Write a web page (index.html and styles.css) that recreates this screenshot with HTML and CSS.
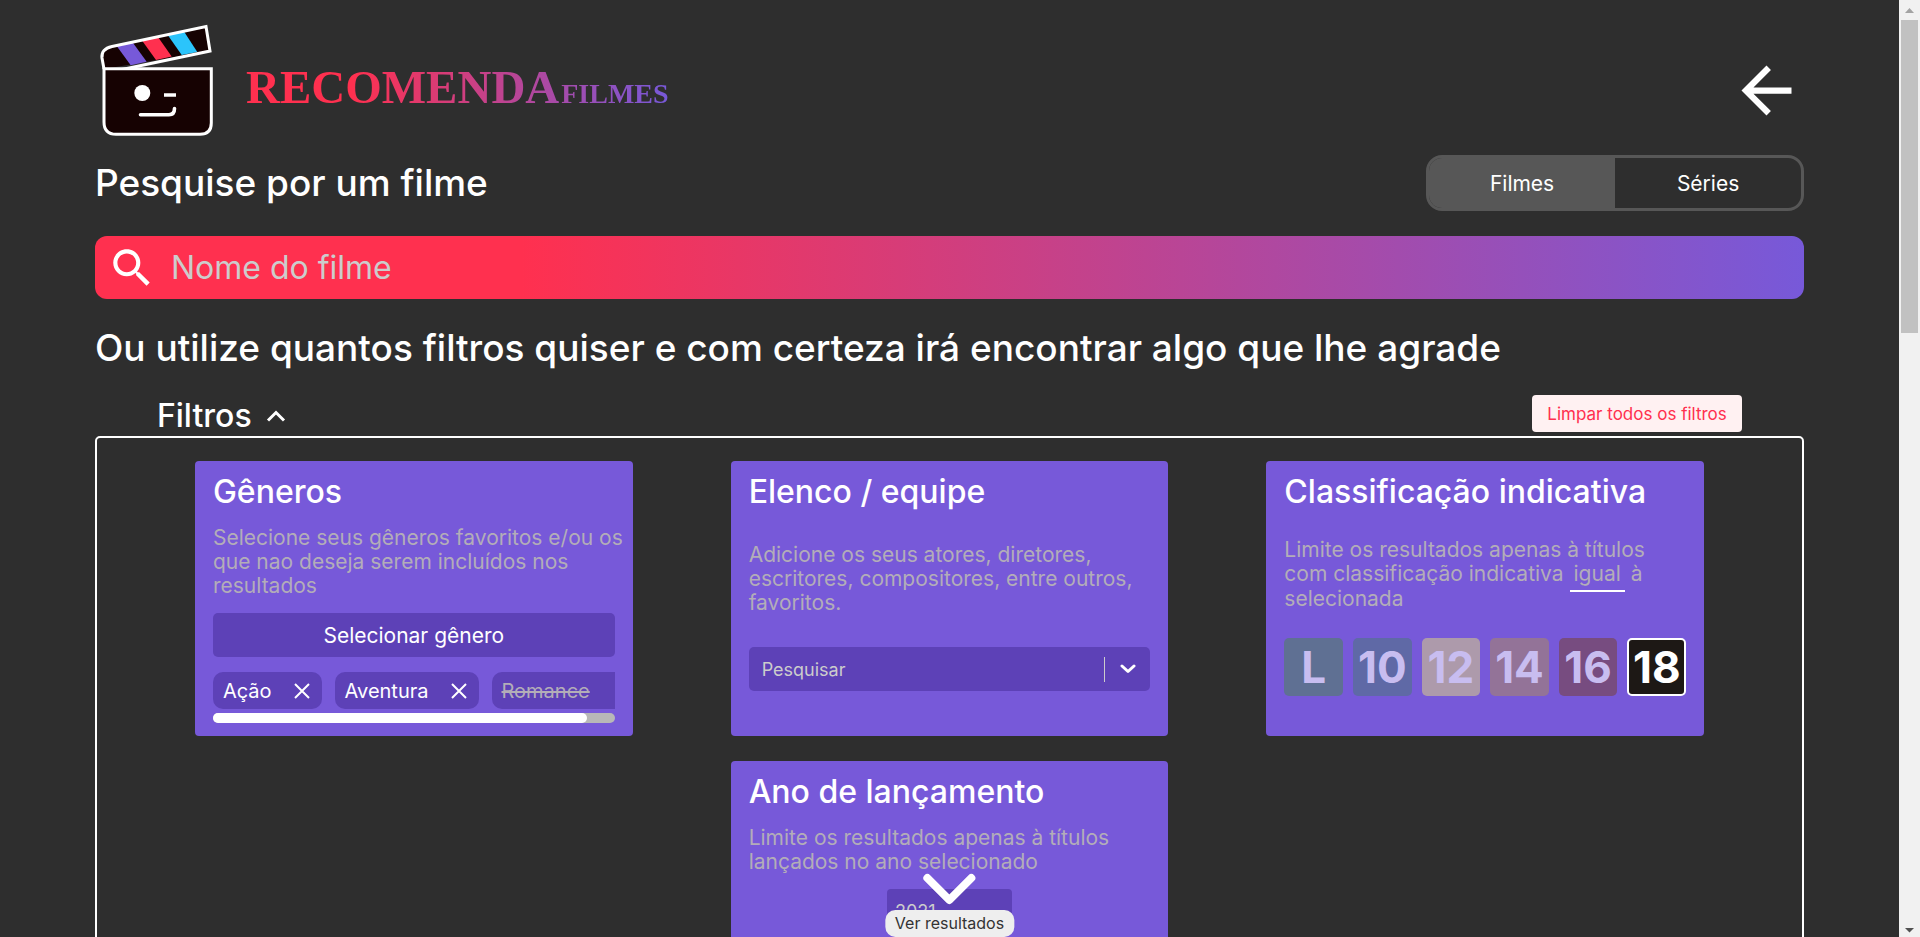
FILE: index.html
```html
<!DOCTYPE html>
<html lang="pt-BR">
<head>
<meta charset="utf-8">
<meta name="viewport" content="width=device-width, initial-scale=1">
<title>Recomenda Filmes</title>
<link rel="stylesheet" href="styles.css">
</head>
<body>
<div class="viewport">
  <main class="page">
    <header class="header">
      <a class="brand" href="#">
        <svg class="brand-logo" viewBox="0 0 120 120" aria-hidden="true">
          <path d="M9 49 L7 38 Q6 29 17 26.500 L111 6.500 L115 31 Z" fill="#160202"/>
          <path d="M21.700 26 37.700 22.500 51.700 41.700 35.700 45.300Z" fill="#7759d9"/>
          <path d="M47 20.500 63 17 76.700 36.500 61 40Z" fill="#ff304f"/>
          <path d="M72.700 15 89 11.500 102.300 32 86.700 35Z" fill="#2bc4fb"/>
          <path d="M9 49 L7 38 Q6 29 17 26.500 L111 6.500 L115 31 L20 51" fill="none" stroke="#fff" stroke-width="3"/>
          <path d="M9 48.700H116.300V103Q116.300 114.300 105 114.300H21Q9 114.300 9 102Z" fill="#160202" stroke="#fff" stroke-width="3"/>
          <circle cx="47.300" cy="73" r="8" fill="#fff"/>
          <path d="M69 75H81" stroke="#fff" stroke-width="3.500"/>
          <path d="M45.500 94.700H74Q79.500 94.700 79.500 88.500" fill="none" stroke="#fff" stroke-width="3.600" stroke-linecap="round"/>
        </svg>
        <span class="brand-name">RECOMENDA<small class="brand-sub">FILMES</small></span>
      </a>
      <a class="back" href="#" aria-label="Voltar">
        <svg class="icon-back" viewBox="0 0 24 24" fill="#fff"><path d="M20 11H7.830l5.590-5.590L12 4l-8 8 8 8 1.410-1.410L7.830 13H20v-2z"/></svg>
      </a>
    </header>

    <section class="search-head">
      <h1 class="heading">Pesquise por um filme</h1>
      <div class="toggle">
        <button class="toggle-option toggle-option-active" type="button" aria-pressed="true">Filmes</button>
        <button class="toggle-option" type="button" aria-pressed="false">Séries</button>
      </div>
    </section>

    <label class="search">
      <svg class="icon-search" viewBox="0 0 24 24" fill="#fff" aria-hidden="true"><path d="M15.500 14h-.790l-.280-.270C15.410 12.590 16 11.110 16 9.500 16 5.910 13.090 3 9.500 3S3 5.910 3 9.500 5.910 16 9.500 16c1.610 0 3.090-.590 4.230-1.570l.270.280v.790l5 4.990L20.490 19l-4.990-5zm-6 0C7.010 14 5 11.990 5 9.500S7.010 5 9.500 5 14 7.010 14 9.500 11.990 14 9.500 14z"/></svg>
      <input class="search-input" type="text" placeholder="Nome do filme" aria-label="Nome do filme">
    </label>

    <h2 class="heading heading-filters">Ou utilize quantos filtros quiser e com certeza irá encontrar algo que lhe agrade</h2>

    <div class="filters-bar">
      <button class="filters-toggle" type="button" aria-expanded="true">Filtros
        <svg class="icon-up" viewBox="0 0 20 14" fill="none" stroke="#fff" stroke-width="3" aria-hidden="true"><path d="M2 11.500 10 3.500 18 11.500"/></svg>
      </button>
      <button class="clear" type="button">Limpar todos os filtros</button>
    </div>

    <section class="filters">
      <article class="card">
        <h3 class="card-title">Gêneros</h3>
        <div class="card-body card-body-packed">
          <p class="card-text">Selecione seus gêneros favoritos e/ou os<br>que nao deseja serem incluídos nos<br>resultados</p>
          <button class="genre-button" type="button">Selecionar gênero</button>
          <div class="genres">
            <ul class="chips">
              <li class="chip">Ação <button class="chip-remove" type="button" aria-label="Remover Ação"><svg class="icon-close" viewBox="0 0 16 16" stroke="#fff" stroke-width="2"><path d="M1 1 15 15M15 1 1 15"/></svg></button></li>
              <li class="chip">Aventura <button class="chip-remove" type="button" aria-label="Remover Aventura"><svg class="icon-close" viewBox="0 0 16 16" stroke="#fff" stroke-width="2"><path d="M1 1 15 15M15 1 1 15"/></svg></button></li>
              <li class="chip chip-excluded"><s>Romance</s> <button class="chip-remove" type="button" aria-label="Remover Romance"><svg class="icon-close" viewBox="0 0 16 16" stroke="#fff" stroke-width="2"><path d="M1 1 15 15M15 1 1 15"/></svg></button></li>
            </ul>
            <div class="chips-track"><div class="chips-thumb"></div></div>
          </div>
        </div>
      </article>

      <article class="card">
        <h3 class="card-title">Elenco / equipe</h3>
        <div class="card-body">
          <p class="card-text">Adicione os seus atores, diretores,<br>escritores, compositores, entre outros,<br>favoritos.</p>
          <div class="combo">
            <input class="combo-input" type="text" placeholder="Pesquisar" aria-label="Pesquisar elenco ou equipe">
            <button class="combo-open" type="button" aria-label="Abrir lista">
              <svg class="icon-down" viewBox="0 0 16 10" fill="none" stroke="#fff" stroke-width="3" stroke-linecap="round" stroke-linejoin="round"><path d="M2 2 8 7.500 14 2"/></svg>
            </button>
          </div>
        </div>
      </article>

      <article class="card">
        <h3 class="card-title">Classificação indicativa</h3>
        <div class="card-body">
          <p class="card-text">Limite os resultados apenas à títulos<br>com classificação indicativa <button class="compare" type="button">igual</button> à<br>selecionada</p>
          <div class="ratings">
            <button class="rating rating-l" type="button">L</button>
            <button class="rating rating-10" type="button">10</button>
            <button class="rating rating-12" type="button">12</button>
            <button class="rating rating-14" type="button">14</button>
            <button class="rating rating-16" type="button">16</button>
            <button class="rating rating-18" type="button" aria-pressed="true">18</button>
          </div>
        </div>
      </article>

      <article class="card card-center">
        <h3 class="card-title">Ano de lançamento</h3>
        <div class="card-body card-body-packed">
          <p class="card-text">Limite os resultados apenas à títulos<br>lançados no ano selecionado</p>
          <input class="year" type="text" value="2021" aria-label="Ano de lançamento">
        </div>
      </article>
    </section>
  </main>

  <a class="results" href="#">
    <svg class="icon-results" viewBox="0 0 54 32" fill="none" stroke="#fff" stroke-width="8" stroke-linecap="round" stroke-linejoin="round" aria-hidden="true"><path d="M5 5 27 27 49 5"/></svg>
    <span class="results-label">Ver resultados</span>
  </a>
</div>
<div class="scrollbar" aria-hidden="true">
  <svg class="scroll-arrow" viewBox="0 0 21 20"><path d="M6 13 10.500 8 15 13Z" fill="#a3a3a3"/></svg>
  <div class="scroll-thumb"></div>
  <svg class="scroll-arrow scroll-arrow-down" viewBox="0 0 21 20"><path d="M6 11 10.500 15.500 15 11Z" fill="#505050"/></svg>
</div>
</body>
</html>
```
FILE: styles.css
```css
:root {
  --red: #ff304f;
  --purple: #7759d9;
  --deep: #5d41b7;
  --muted: #b3adb8;
}

* {
  box-sizing: border-box;
}

body {
  margin: 0;
  height: 100vh;
  display: flex;
  overflow: hidden;
  background: #2e2e2e;
  color: #fff;
  font-family: Inter, sans-serif;
}

button,
input {
  margin: 0;
  padding: 0;
  border: 0;
  background: none;
  color: inherit;
  font: inherit;
}

button {
  cursor: pointer;
}

svg {
  display: block;
}

.viewport {
  flex: 1;
  min-width: 0;
  position: relative;
  overflow: hidden;
}

.page {
  height: 100%;
  padding: 20px 5% 0;
  overflow-y: auto;
  scrollbar-width: none;
}

/* Header */
.header {
  display: flex;
  justify-content: space-between;
  align-items: center;
  height: 135px;
  padding-top: 5px;
}

.brand {
  display: flex;
  align-items: center;
  gap: 31px;
  text-decoration: none;
}

.brand-logo {
  width: 120px;
  height: 120px;
  margin-bottom: 20px;
}

.brand-name {
  background: linear-gradient(to right, var(--red) 25%, var(--purple));
  background-clip: text;
  color: transparent;
  font: bold 47px/60px "Liberation Serif", serif;
}

.brand-sub {
  margin-left: 2px;
  font-size: 28px;
}

.icon-back {
  width: 75px;
  height: 75px;
}

/* Search */
.search-head {
  display: flex;
  justify-content: space-between;
  align-items: center;
  margin-bottom: 25px;
}

.heading {
  margin: 0;
  font-size: 37px;
  font-weight: 500;
  line-height: 44px;
  white-space: nowrap;
}

.toggle {
  display: flex;
  width: 378px;
  height: 56px;
  border: 3px solid #575757;
  border-radius: 16px;
  overflow: hidden;
}

.toggle-option {
  flex: 1;
  font-size: 21px;
}

.toggle-option-active {
  background: #575757;
}

.search {
  display: flex;
  align-items: center;
  gap: 14px;
  height: 63px;
  padding: 0 12px;
  border-radius: 12px;
  background: linear-gradient(to right, var(--red) 25%, var(--purple));
}

.icon-search {
  width: 50px;
  height: 50px;
}

.search-input {
  flex: 1;
  min-width: 0;
  font-size: 32px;
}

.search-input::placeholder {
  color: #ccc;
  opacity: 1;
}

.heading-filters {
  margin: 27px 0 25px;
}

/* Filters */
.filters-bar {
  display: flex;
  justify-content: space-between;
  padding: 0 62px;
  height: 41px;
}

.filters-toggle {
  display: flex;
  align-items: center;
  gap: 14px;
  font-size: 32px;
  font-weight: 500;
  line-height: 46px;
}

.icon-up {
  width: 20px;
  height: 14px;
}

.clear {
  width: 210px;
  height: 37px;
  border-radius: 4px;
  background: #fff1f2;
  color: var(--red);
  font-size: 17px;
}

.filters {
  display: grid;
  grid-template-columns: repeat(3, minmax(0, 1fr));
  gap: 25px 98px;
  padding: 23px 98px;
  border: 2px solid #fff;
  border-radius: 5px;
}

.card {
  display: flex;
  flex-direction: column;
  padding: 12px 18px 13px;
  border-radius: 4px;
  background: var(--purple);
}

.card-center {
  grid-column: 2;
}

.card-title {
  margin: 0;
  font-size: 32px;
  font-weight: 500;
  line-height: 38px;
  white-space: nowrap;
}

.card-body {
  flex: 1;
  display: flex;
  flex-direction: column;
  justify-content: space-evenly;
}

.card-body-packed {
  justify-content: flex-start;
  gap: 15px;
  padding-top: 15px;
}

.card-text {
  margin: 0;
  color: var(--muted);
  font-size: 21px;
  line-height: 24px;
  white-space: nowrap;
}

.genre-button {
  height: 44px;
  border-radius: 5px;
  background: var(--deep);
  font-size: 21px;
}

.chips {
  display: flex;
  gap: 13px;
  margin: 0 0 4px;
  padding: 0;
  overflow: hidden;
  list-style: none;
}

.chip {
  flex: none;
  display: flex;
  align-items: center;
  gap: 22px;
  height: 37px;
  padding: 0 12px 0 10px;
  border-radius: 10px;
  background: var(--deep);
  font-size: 20px;
}

.chip-excluded {
  gap: 28px;
  color: var(--muted);
}

.icon-close {
  width: 16px;
  height: 16px;
}

.chips-track {
  height: 10px;
  border-radius: 5px;
  background: #b8b8b8;
}

.chips-thumb {
  width: 93%;
  height: 100%;
  border-radius: 5px;
  background: #fff;
}

.combo {
  display: flex;
  align-items: center;
  height: 44px;
  border-radius: 5px;
  background: var(--deep);
}

.combo-input {
  flex: 1;
  min-width: 0;
  padding-left: 13px;
  font-size: 18px;
}

.combo-input::placeholder {
  color: #ccc;
  opacity: 1;
}

.combo-open {
  display: grid;
  place-items: center;
  width: 46px;
  height: 25px;
  border-left: 1px solid #ccc;
}

.icon-down {
  width: 16px;
  height: 10px;
}

.compare {
  height: 34px;
  margin: -5px 0;
  padding: 0 4px;
  border-bottom: 2px solid #fff;
}

.ratings {
  display: grid;
  grid-template-columns: repeat(6, minmax(0, 1fr));
  gap: 10px;
}

.rating {
  height: 58px;
  border-radius: 5px;
  color: #c8bdf0;
  font-size: 44px;
  font-weight: 700;
  line-height: 54px;
}

.rating-l { background: #5f7093; }
.rating-10 { background: #5f69a6; }
.rating-12 { background: #ad9aab; }
.rating-14 { background: #937398; }
.rating-16 { background: #774c80; }

.rating-18 {
  border: 2px solid #fff;
  background: #1d1815;
  color: #fff;
}

.year {
  align-self: center;
  width: 125px;
  height: 44px;
  padding-left: 8px;
  border-radius: 4px;
  background: var(--deep);
  color: #ccc;
  font-size: 18px;
}

/* Shortcut pinned to the bottom of the window */
.results {
  position: absolute;
  bottom: 0;
  left: 50%;
  display: flex;
  flex-direction: column;
  align-items: center;
  gap: 5px;
  transform: translateX(-50%);
  color: #333;
  text-decoration: none;
}

.icon-results {
  width: 54px;
  height: 32px;
}

.results-label {
  padding: 0 10px;
  border-radius: 10px;
  background: #eee;
  font-size: 16px;
  line-height: 27px;
  white-space: nowrap;
}

/* Scrollbar */
.scrollbar {
  display: flex;
  flex-direction: column;
  width: 21px;
  background: #f1f1f1;
}

.scroll-arrow {
  width: 21px;
  height: 20px;
}

.scroll-arrow-down {
  margin-top: auto;
}

.scroll-thumb {
  flex: 0 0 313px;
  margin: 0 2px;
  background: #c1c1c1;
}
```
